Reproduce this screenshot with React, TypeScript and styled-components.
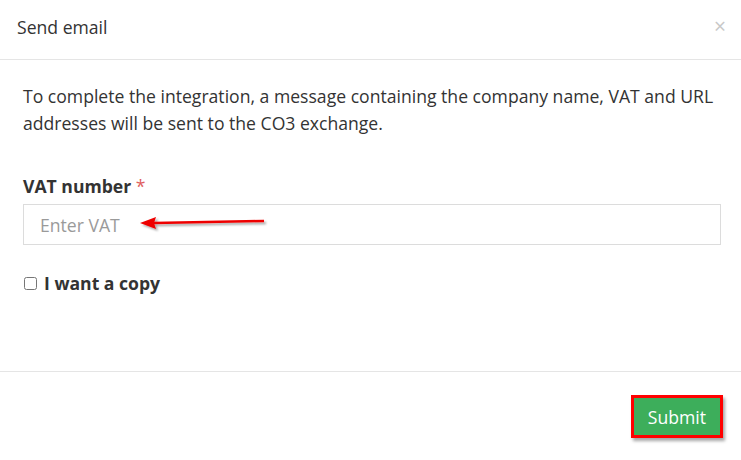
import React from "react";
import styled, { createGlobalStyle } from "styled-components";

const Global = createGlobalStyle`
  html, body { margin: 0; padding: 0; background: #fff; }
  body { font-family: "Open Sans", "Liberation Sans", sans-serif; color: #333; }
  * { box-sizing: border-box; }
`;

const Modal = styled.div`
  width: 741px;
  height: 460px;
  display: flex;
  flex-direction: column;
  background: #fff;
`;

const Header = styled.div`
  height: 60px;
  display: flex;
  align-items: center;
  justify-content: space-between;
  padding: 0 15px 6px 17px;
  border-bottom: 1px solid #e5e5e5;
`;

const Title = styled.h4`
  margin: 0;
  font-size: 17.6px;
  font-weight: 400;
  color: #333;
`;

const Close = styled.button`
  border: 0;
  background: none;
  padding: 0;
  font-family: "Open Sans", sans-serif;
  font-size: 21px;
  line-height: 1;
  color: #c8c8c8;
  cursor: pointer;
`;

const Body = styled.div`
  flex: 1;
  padding: 23px 20px 0 23px;
  border-bottom: 1px solid #e5e5e5;
`;

const Intro = styled.p`
  margin: 0 0 37px 0;
  font-size: 17.6px;
  line-height: 27px;
`;

const Label = styled.label`
  display: block;
  font-weight: 700;
  font-size: 17.6px;
  line-height: 24px;
  margin-bottom: 6px;
`;

const Required = styled.span`
  color: #e06060;
  font-weight: 400;
`;

const InputWrap = styled.div`
  position: relative;
  width: 698px;
`;

const Input = styled.input`
  width: 100%;
  height: 41px;
  border: 1px solid #dcdcdc;
  padding: 0 16px;
  font-family: "Open Sans", sans-serif;
  font-size: 17.6px;
  color: #333;
  outline: none;
  &::placeholder { color: #9a9a9a; }
`;

const Arrow = styled.svg`
  position: absolute;
  left: 117px;
  top: 10px;
  overflow: visible;
`;

const CheckRow = styled.label`
  display: flex;
  align-items: center;
  gap: 7px;
  margin-top: 26px;
  font-weight: 700;
  font-size: 17.6px;
`;

const Check = styled.input`
  width: 13px;
  height: 13px;
  margin: 0 0 0 1px;
`;

const Footer = styled.div`
  height: 88px;
  display: flex;
  justify-content: flex-end;
  align-items: flex-start;
  padding: 23px 18px 0 0;
`;

const Submit = styled.button`
  background: #3dae5b;
  color: #fff;
  border: 3px solid #ff0000;
  height: 43px;
  padding: 0 14px;
  font-family: "Open Sans", sans-serif;
  font-size: 17.6px;
  box-shadow: 2px 3px 3px rgba(0, 0, 0, 0.35);
  cursor: pointer;
`;

export default function App() {
  return (
    <>
      <Global />
      <Modal>
        <Header>
          <Title>Send email</Title>
          <Close aria-label="Close">×</Close>
        </Header>
        <Body>
          <Intro>
            To complete the integration, a message containing the company name, VAT and URL addresses will be sent to the CO3 exchange.
          </Intro>
          <Label>
            VAT number <Required>*</Required>
          </Label>
          <InputWrap>
            <Input placeholder="Enter VAT" />
            <Arrow width="126" height="20" viewBox="0 0 126 20">
              <defs>
                <filter id="sh" x="-10%" y="-50%" width="130%" height="250%">
                  <feDropShadow dx="2" dy="2" stdDeviation="1.2" floodColor="#000" floodOpacity="0.35" />
                </filter>
              </defs>
              <g filter="url(#sh)">
                <line x1="14" y1="9" x2="124" y2="7" stroke="#ee0000" strokeWidth="2.5" />
                <polygon points="0,9 16,3 14,9 16,15" fill="#ee0000" />
              </g>
            </Arrow>
          </InputWrap>
          <CheckRow>
            <Check type="checkbox" />
            I want a copy
          </CheckRow>
        </Body>
        <Footer>
          <Submit>Submit</Submit>
        </Footer>
      </Modal>
    </>
  );
}
